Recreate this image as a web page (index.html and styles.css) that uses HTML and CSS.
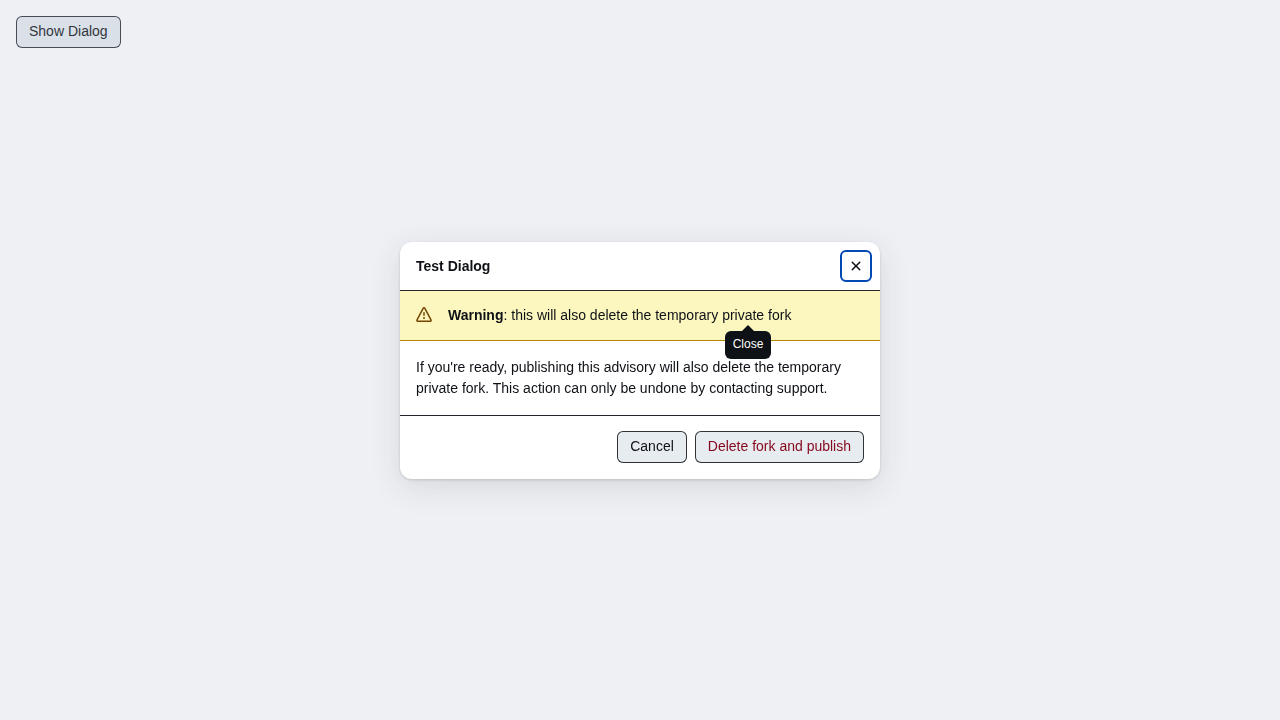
FILE: index.html
```html
<!DOCTYPE html>
<html lang="en">
<head>
<meta charset="utf-8">
<title>Test Dialog</title>
<link rel="stylesheet" href="styles.css">
</head>
<body>
<button class="btn">Show Dialog</button>
<div class="overlay">
  <div class="dialog" role="dialog" aria-labelledby="dialog-title">
    <header class="dialog-header">
      <h1 class="dialog-title" id="dialog-title">Test Dialog</h1>
      <button class="close-btn" aria-label="Close">
        <svg width="16" height="16" viewBox="0 0 16 16" fill="currentColor"><path d="M3.72 3.72a.75.75 0 0 1 1.06 0L8 6.94l3.22-3.22a.749.749 0 0 1 1.275.326.749.749 0 0 1-.215.734L9.06 8l3.22 3.22a.749.749 0 0 1-.326 1.275.749.749 0 0 1-.734-.215L8 9.06l-3.22 3.22a.751.751 0 0 1-1.042-.018.751.751 0 0 1-.018-1.042L6.94 8 3.72 4.78a.75.75 0 0 1 0-1.06Z"/></svg>
      </button>
    </header>
    <div class="banner">
      <svg class="banner-icon" width="16" height="16" viewBox="0 0 16 16" fill="currentColor"><path d="M6.457 1.047c.659-1.234 2.427-1.234 3.086 0l6.082 11.378A1.75 1.75 0 0 1 14.082 15H1.918a1.75 1.75 0 0 1-1.543-2.575Zm1.763.707a.25.25 0 0 0-.44 0L1.698 13.132a.25.25 0 0 0 .22.368h12.164a.25.25 0 0 0 .22-.368Zm.53 3.996v2.5a.75.75 0 0 1-1.5 0v-2.5a.75.75 0 0 1 1.5 0ZM9 11a1 1 0 1 1-2 0 1 1 0 0 1 2 0Z"/></svg>
      <p class="banner-text"><strong>Warning</strong>: this will also delete the temporary private fork</p>
    </div>
    <div class="dialog-body">If you're ready, publishing this advisory will also delete the temporary private fork. This action can only be undone by contacting support.</div>
    <footer class="dialog-footer">
      <button class="btn">Cancel</button>
      <button class="btn btn-danger">Delete fork and publish</button>
    </footer>
    <span class="tooltip" role="tooltip">Close</span>
  </div>
</div>
</body>
</html>
```
FILE: styles.css
```css
* { box-sizing: border-box; }
body {
  margin: 0;
  padding: 16px;
  background: #fff;
  color: #0e1116;
  font: 14px/21px "Liberation Sans", Arial, sans-serif;
}
.btn {
  height: 32px;
  padding: 0 12px 2px;
  border: 1px solid rgba(1, 4, 9, 0.8);
  border-radius: 6px;
  background: #e7ecf0;
  color: #0e1116;
  font: 14px/20px "Liberation Sans", Arial, sans-serif;
}
.btn-danger { color: #86061d; }
.overlay {
  position: fixed;
  inset: 0;
  display: flex;
  align-items: center;
  justify-content: center;
  background: rgba(172, 178, 198, 0.2);
}
.dialog {
  position: relative;
  width: 480px;
  border-radius: 12px;
  background: #fff;
  box-shadow: 0 1px 3px rgba(37, 41, 46, 0.18), 0 8px 32px rgba(37, 41, 46, 0.12);
}
.dialog-header {
  display: flex;
  align-items: center;
  justify-content: space-between;
  height: 49px;
  padding: 0 8px 0 16px;
  border-bottom: 1px solid #20252c;
}
.dialog-title { margin: 0; font-size: 14px; line-height: 20px; }
.close-btn {
  display: grid;
  place-items: center;
  width: 32px;
  height: 32px;
  padding: 0;
  border: 2px solid #0349b4;
  border-radius: 6px;
  background: #fff;
  color: #0e1116;
}
.banner {
  display: flex;
  align-items: center;
  gap: 16px;
  height: 50px;
  padding: 0 16px;
  border-bottom: 1px solid #b58407;
  background: #fcf7be;
}
.banner-icon { color: #744500; }
.banner-text { margin: 0; }
.dialog-body { padding: 16px; }
.dialog-footer {
  display: flex;
  justify-content: flex-end;
  gap: 8px;
  padding: 15px 16px 16px;
  border-top: 1px solid #20252c;
}
.tooltip {
  position: absolute;
  top: 89px;
  left: 325px;
  width: 46px;
  padding: 4px 0 6px;
  border-radius: 6px;
  background: #0e1116;
  color: #fff;
  font-size: 12px;
  line-height: 18px;
  text-align: center;
}
.tooltip::before {
  content: "";
  position: absolute;
  top: -6px;
  left: 50%;
  margin-left: -6px;
  border: 6px solid transparent;
  border-top: 0;
  border-bottom-color: #0e1116;
}
```
